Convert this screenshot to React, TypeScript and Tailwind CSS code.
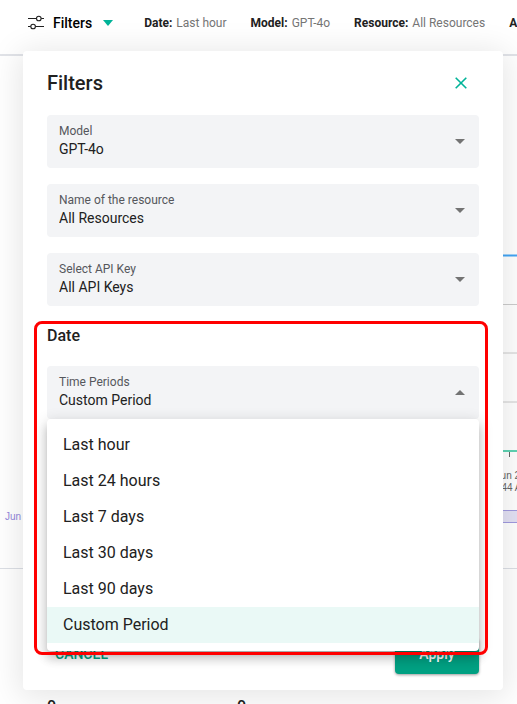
import { useState } from "react";
import clsx from "clsx";

const summary = [
  { label: "Date:", value: "Last hour" },
  { label: "Model:", value: "GPT-4o" },
  { label: "Resource:", value: "All Resources" },
  { label: "API Key:", value: "All API Keys" },
];

const periods = [
  "Last hour",
  "Last 24 hours",
  "Last 7 days",
  "Last 30 days",
  "Last 90 days",
  "Custom Period",
];

type SelectFieldProps = {
  id: string;
  label: string;
  value: string;
  options: string[];
  open?: boolean;
  onChange?: (value: string) => void;
};

function SlidersIcon() {
  return (
    <svg width="16" height="16" viewBox="0 0 16 16" fill="none" stroke="#212121" strokeWidth="1.1">
      <path d="M0 3.5h8.4M13.2 3.5H16M0 11.5h2.7M7.5 11.5H16" />
      <circle cx="10.8" cy="3.5" r="2.3" />
      <circle cx="5.1" cy="11.5" r="2.3" />
    </svg>
  );
}

function SelectField({ id, label, value, options, open, onChange }: SelectFieldProps) {
  return (
    <div className="relative rounded bg-[#f3f4f6]">
      <label htmlFor={id} className="absolute top-2 left-3 text-xs text-[#55575c]">
        {label}
      </label>
      <select
        id={id}
        value={value}
        onChange={(e) => onChange?.(e.target.value)}
        className="block h-[53px] w-full appearance-none rounded px-3 pt-6 pb-2.5 text-sm text-[#212121] outline-none"
      >
        {options.map((option) => (
          <option key={option}>{option}</option>
        ))}
      </select>
      <svg
        className={clsx("pointer-events-none absolute top-6 right-3.5", open && "rotate-180")}
        width="10"
        height="5"
        viewBox="0 0 10 5"
      >
        <path d="M0 0h10L5 5z" fill="#737373" />
      </svg>
    </div>
  );
}

function UsageChart() {
  return (
    <svg className="block w-full" height="512">
      <g stroke="#cccccc">
        <line x1="40" x2="100%" y1="248.5" y2="248.5" />
        <line x1="40" x2="100%" y1="297" y2="297" />
        <line x1="40" x2="100%" y1="346" y2="346" />
      </g>
      <line x1="40" x2="100%" y1="199.5" y2="199.5" stroke="#42a5f5" strokeWidth="2" />
      <line x1="40" x2="100%" y1="395" y2="395" stroke="#5fd3b3" strokeWidth="2" />
      <line x1="509.5" x2="509.5" y1="396" y2="401" stroke="#666666" />
      <g fontSize="10" fill="#666666" textAnchor="middle" className="font-['Liberation_Sans',sans-serif]">
        <text x="512" y="423">Jun 24,</text>
        <text x="509" y="435">11:44 AM</text>
      </g>
      <rect x="40" y="454.5" width="100%" height="12" fill="#e3e1f4" stroke="#a09adf" />
      <text x="5" y="464" fontSize="10" fill="#9488dc" className="font-['Liberation_Sans',sans-serif]">
        Jun
      </text>
    </svg>
  );
}

export default function App() {
  const [period, setPeriod] = useState("Custom Period");

  return (
    <div className="relative h-screen overflow-hidden bg-white font-[Roboto,sans-serif] text-[#212121]">
      <header className="flex h-14 items-center gap-6 border-b-2 border-[#e1e3e8] pb-2 pl-7 text-xs whitespace-nowrap">
        <button className="mr-[7px] flex items-center gap-[9px] text-sm font-medium text-black">
          <SlidersIcon />
          Filters
          <svg className="ml-0.5" width="10" height="6" viewBox="0 0 10 6">
            <path d="M0 0h10L5 6z" fill="#00b398" />
          </svg>
        </button>
        {summary.map(({ label, value }) => (
          <p key={label} className="flex shrink-0 gap-1">
            <span className="font-bold">{label}</span>
            <span className="text-[#757575]">{value}</span>
          </p>
        ))}
      </header>

      <main>
        <UsageChart />
        <div className="grid grid-cols-[190px_190px] border-t border-[#dcdfe5] pt-[126px] pl-[47px] font-medium">
          <span>0</span>
          <span>0</span>
        </div>
      </main>

      {/* Filter dialog */}
      <section
        role="dialog"
        aria-labelledby="filters-title"
        className="absolute top-[51px] right-3.5 left-[23px] rounded bg-white px-6 py-4 shadow-[0_4px_32px_4px_rgba(0,0,0,0.1)]"
      >
        <div className="mb-4 flex items-center justify-between">
          <h2 id="filters-title" className="text-xl leading-8 font-medium">
            Filters
          </h2>
          <button aria-label="Close" className="-my-3 p-3">
            <svg width="12" height="12" viewBox="0 0 12 12" stroke="#00b398" strokeWidth="1.6">
              <path d="M.7.7l10.6 10.6M11.3.7L.7 11.3" />
            </svg>
          </button>
        </div>

        <div className="flex flex-col gap-4">
          <SelectField id="model" label="Model" value="GPT-4o" options={["GPT-4o"]} />
          <SelectField
            id="resource"
            label="Name of the resource"
            value="All Resources"
            options={["All Resources"]}
          />
          <SelectField
            id="api-key"
            label="Select API Key"
            value="All API Keys"
            options={["All API Keys"]}
          />
        </div>

        <div className="relative mt-[15px] pt-[3px]">
          <h3 className="mb-[18px] font-medium">Date</h3>
          <SelectField
            id="period"
            label="Time Periods"
            value={period}
            options={periods}
            open
            onChange={setPeriod}
          />
          <ul
            role="listbox"
            aria-label="Time Periods"
            className="absolute top-full left-0 z-10 w-full rounded bg-white py-2 shadow-[0_5px_5px_-3px_rgba(0,0,0,0.2),0_8px_10px_1px_rgba(0,0,0,0.14),0_3px_14px_2px_rgba(0,0,0,0.12)]"
          >
            {periods.map((option) => (
              <li key={option} role="option" aria-selected={option === period}>
                <button
                  onClick={() => setPeriod(option)}
                  className={clsx(
                    "block w-full px-4 py-1.5 text-left text-base",
                    option === period && "bg-[#eaf9f6]"
                  )}
                >
                  {option}
                </button>
              </li>
            ))}
          </ul>
          <div className="pointer-events-none absolute top-0 -right-[9px] -bottom-[236px] -left-[13px] z-20 rounded-lg border-3 border-[#ff0000]" />
        </div>

        <div className="mt-[219px] flex items-center justify-between">
          <button className="h-9 px-2 pb-1 text-sm font-medium text-[#00a082] uppercase">
            Cancel
          </button>
          <button className="h-9 w-21 rounded bg-[#00a082] pb-1 text-sm font-medium text-white shadow-[0_1px_3px_rgba(0,0,0,0.4)]">
            Apply
          </button>
        </div>
      </section>
    </div>
  );
}
